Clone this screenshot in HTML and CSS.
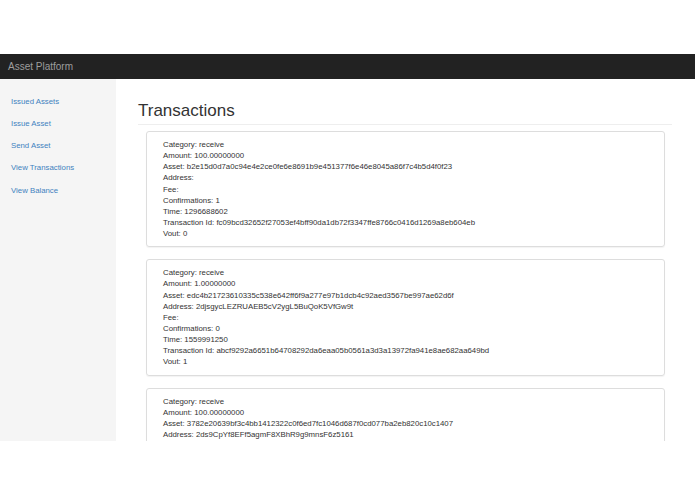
FILE: index.html
```html
<!DOCTYPE html>
<html>
<head>
<meta charset="utf-8">
<title>Asset Platform</title>
<link rel="stylesheet" href="styles.css">
</head>
<body>
<div class="app">
  <div class="navbar"><span class="brand">Asset Platform</span></div>
  <div class="main">
    <nav class="sidebar">
      <a href="#">Issued Assets</a>
      <a href="#">Issue Asset</a>
      <a href="#">Send Asset</a>
      <a href="#">View Transactions</a>
      <a href="#">View Balance</a>
    </nav>
    <div class="content">
      <h2 class="title">Transactions</h2>
      <div class="card">
        <div>Category: receive</div>
        <div>Amount: 100.00000000</div>
        <div>Asset: b2e15d0d7a0c94e4e2ce0fe6e8691b9e451377f6e46e8045a86f7c4b5d4f0f23</div>
        <div>Address: </div>
        <div>Fee: </div>
        <div>Confirmations: 1</div>
        <div>Time: 1296688602</div>
        <div>Transaction Id: fc09bcd32652f27053ef4bff90da1db72f3347ffe8766c0416d1269a8eb604eb</div>
        <div>Vout: 0</div>
      </div>
      <div class="card">
        <div>Category: receive</div>
        <div>Amount: 1.00000000</div>
        <div>Asset: edc4b21723610335c538e642ff6f9a277e97b1dcb4c92aed3567be997ae62d6f</div>
        <div>Address: 2djsgycLEZRUAEB5cV2ygL5BuQoK5VfGw9t</div>
        <div>Fee: </div>
        <div>Confirmations: 0</div>
        <div>Time: 1559991250</div>
        <div>Transaction Id: abcf9292a6651b64708292da6eaa05b0561a3d3a13972fa941e8ae682aa649bd</div>
        <div>Vout: 1</div>
      </div>
      <div class="card card-last">
        <div>Category: receive</div>
        <div>Amount: 100.00000000</div>
        <div>Asset: 3782e20639bf3c4bb1412322c0f6ed7fc1046d687f0cd077ba2eb820c10c1407</div>
        <div>Address: 2ds9CpYf8EFf5agmF8XBhR9g9mnsF6z5161</div>
      </div>
    </div>
  </div>
</div>
</body>
</html>
```
FILE: styles.css
```css
html, body {
  margin: 0;
  padding: 0;
  background: #fff;
}
body {
  font-family: "Liberation Sans", Arial, Helvetica, sans-serif;
  color: #333;
  font-size: 7.8px;
  line-height: 11.14px;
}
.app {
  margin-top: 54px;
  height: 387px;
  overflow: hidden;
  display: flex;
  flex-direction: column;
}
.navbar {
  height: 25px;
  flex: none;
  background: #222;
  display: flex;
  align-items: center;
  padding-left: 8px;
}
.brand {
  color: #9d9d9d;
  font-size: 10px;
  line-height: 12px;
}
.main {
  flex: 1;
  display: flex;
  min-height: 0;
}
.sidebar {
  width: 116px;
  flex: none;
  background: #f5f5f5;
  padding-top: 11px;
  display: flex;
  flex-direction: column;
  align-items: flex-start;
}
.sidebar a {
  color: #3f82c0;
  text-decoration: none;
  padding: 5.57px 11px;
  line-height: 11.14px;
}
.content {
  flex: 1;
  min-width: 0;
  padding: 0 23px 0 22px;
  overflow: hidden;
}
.title {
  margin: 22px 0 6px;
  font-size: 17px;
  line-height: 19px;
  font-weight: normal;
  color: #333;
  padding-bottom: 4px;
  border-bottom: 1px solid #eee;
}
.card {
  margin: 0 7px 12px 8px;
  border: 1px solid #ddd;
  border-radius: 3px;
  box-shadow: 0 1px 1px rgba(0, 0, 0, 0.05);
  padding: 7px 16px;
  white-space: nowrap;
}
.card-last {
  padding-bottom: 20px;
}
```
